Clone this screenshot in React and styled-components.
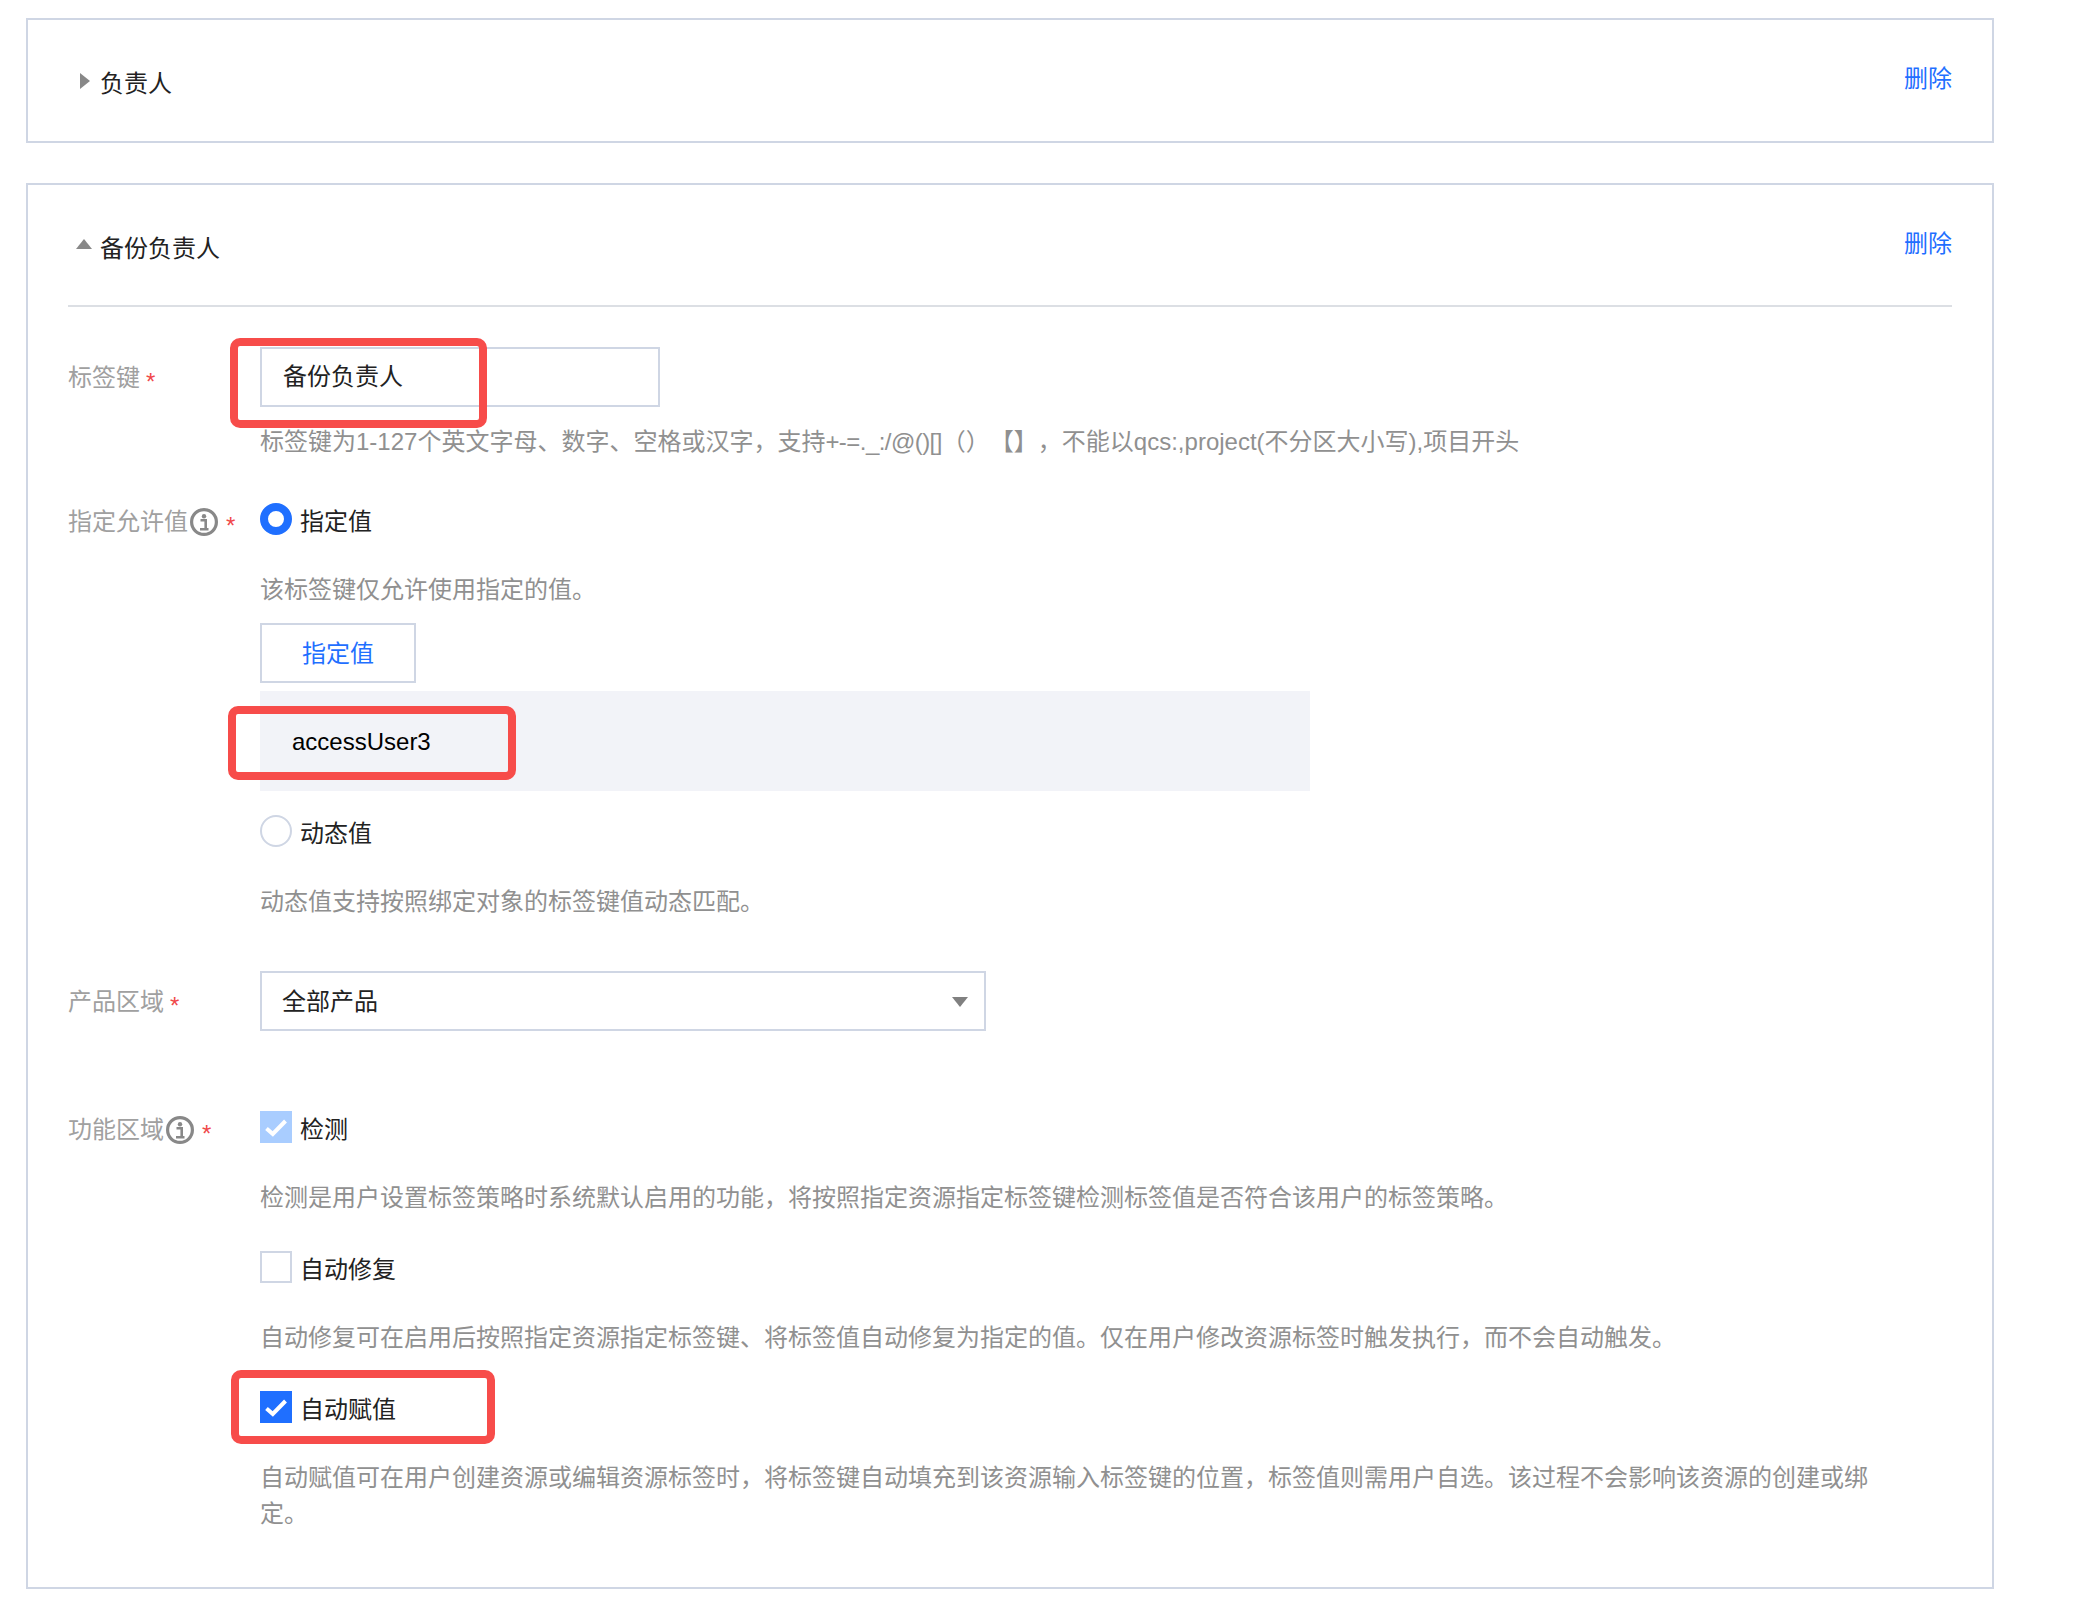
import React from "react";
import styled, { createGlobalStyle } from "styled-components";

const GlobalStyle = createGlobalStyle`
  html, body {
    margin: 0;
    padding: 0;
    background: #fff;
  }
  body {
    font-family: "Liberation Sans", "Noto Sans CJK SC", sans-serif;
    font-size: 24px;
    line-height: 36px;
    color: #222;
    text-spacing-trim: space-all;
  }
`;

function InfoIcon() {
  return (
    <InfoSvg viewBox="0 0 28 28" aria-hidden="true">
      <circle cx="14" cy="14" r="12.4" fill="none" stroke="#888" strokeWidth="3.2" />
      <circle cx="14" cy="8.2" r="2.2" fill="#888" />
      <path d="M10.5 12.2h5.2v9M10 21.2h8.5" fill="none" stroke="#888" strokeWidth="2.6" />
    </InfoSvg>
  );
}

function Check({ color }) {
  return (
    <CheckBox $bg={color}>
      <svg width="32" height="32" viewBox="0 0 32 32" aria-hidden="true">
        <path d="M6.5 17.5l6.3 5.5L25.5 10" fill="none" stroke="#fff" strokeWidth="4" />
      </svg>
    </CheckBox>
  );
}

function App() {
  return (
    <Page>
      <GlobalStyle />
      <Card $collapsed>
        <Header>
          <Title>
            <ArrowRight />
            负责人
          </Title>
          <Remove>删除</Remove>
        </Header>
      </Card>

      <Card $second>
        <Header $divided>
          <Title>
            <ArrowUp />
            备份负责人
          </Title>
          <Remove>删除</Remove>
        </Header>

        <Row $top={40}>
          <Label $center>
            标签键<Star />
          </Label>
          <Field>
            <Marked $box="-9px auto -21px -30px" $width={257}>
              <Input>备份负责人</Input>
            </Marked>
            <Hint $top={16}>
              标签键为1-127个英文字母、数字、空格或汉字，支持<Tight>+-=._:/@()[]</Tight>（）【】，不能以qcs:,project(不分区大小写),项目开头
            </Hint>
          </Field>
        </Row>

        <Row $top={44}>
          <Label>
            指定允许值
            <InfoIcon />
            <Star />
          </Label>
          <Field>
            <Choice>
              <Radio $on />
              指定值
            </Choice>
            <Hint $top={32}>该标签键仅允许使用指定的值。</Hint>
            <ValueButton>指定值</ValueButton>
            <Marked $box="15px auto 11px -32px" $width={288}>
              <ValueStrip>accessUser3</ValueStrip>
            </Marked>
            <Choice $top={24}>
              <Radio />
              动态值
            </Choice>
            <Hint $top={32}>动态值支持按照绑定对象的标签键值动态匹配。</Hint>
          </Field>
        </Row>

        <Row $top={52}>
          <Label $center>
            产品区域<Star />
          </Label>
          <Field>
            <Select>
              全部产品
              <SelectArrow />
            </Select>
          </Field>
        </Row>

        <Row $top={80}>
          <Label>
            功能区域
            <InfoIcon />
            <Star />
          </Label>
          <Field>
            <Choice>
              <Check color="#a9cdff" />
              检测
            </Choice>
            <Hint $top={32}>
              检测是用户设置标签策略时系统默认启用的功能，将按照指定资源指定标签键检测标签值是否符合该用户的标签策略。
            </Hint>
            <Choice $top={36}>
              <CheckBox $empty />
              自动修复
            </Choice>
            <Hint $top={32}>
              自动修复可在启用后按照指定资源指定标签键、将标签值自动修复为指定的值。仅在用户修改资源标签时触发执行，而不会自动触发。
            </Hint>
            <Marked $box="-21px auto -17px -29px" $width={264} $top={36}>
              <Choice>
                <Check color="#1f6fff" />
                自动赋值
              </Choice>
            </Marked>
            <Hint $top={32} $wrap>
              自动赋值可在用户创建资源或编辑资源标签时，将标签键自动填充到该资源输入标签键的位置，标签值则需用户自选。该过程不会影响该资源的创建或绑定。
            </Hint>
          </Field>
        </Row>
      </Card>
    </Page>
  );
}

const Page = styled.div`
  width: 1968px;
  padding: 18px 104px 22px 26px;
`;

const Card = styled.section`
  box-sizing: border-box;
  border: 2px solid #cfd6e4;
  padding: 0 40px ${(p) => (p.$collapsed ? 0 : 56)}px;
  min-height: ${(p) => (p.$collapsed ? 125 : 0)}px;
  margin-top: ${(p) => (p.$second ? 40 : 0)}px;
`;

const Header = styled.div`
  display: flex;
  justify-content: space-between;
  align-items: flex-start;
  padding: 40px 0;
  border-bottom: ${(p) => (p.$divided ? "2px solid #dcdfe4" : "none")};
`;

const Title = styled.div`
  position: relative;
  margin: 4px 0 -2px;
  padding: 2px 0 0 32px;
  color: #222;
`;

const ArrowRight = styled.i`
  position: absolute;
  left: 12px;
  top: 9px;
  border-style: solid;
  border-width: 8px 0 8px 10px;
  border-color: transparent transparent transparent #888;
`;

const ArrowUp = styled.i`
  position: absolute;
  left: 8px;
  top: 10px;
  border-style: solid;
  border-width: 0 8px 10px;
  border-color: transparent transparent #888;
`;

const Remove = styled.a`
  padding-top: 1px;
  color: #1f6fff;
  cursor: pointer;
`;

const Row = styled.div`
  display: flex;
  align-items: flex-start;
  margin-top: ${(p) => p.$top}px;
`;

const Label = styled.div`
  box-sizing: border-box;
  width: 192px;
  flex: none;
  display: flex;
  align-items: center;
  height: ${(p) => (p.$center ? "60px" : "36px")};
  padding-top: 2px;
  color: #a0a0a0;
`;

const InfoSvg = styled.svg`
  width: 28px;
  height: 28px;
  margin-left: 2px;
  flex: none;
`;

const Star = styled.span`
  margin-left: 6px;
  padding-top: 8px;
  color: #f0484a;
  font-size: 24px;
  line-height: 24px;
  &::before {
    content: "*";
  }
  ${InfoSvg} + & {
    margin-left: 8px;
  }
`;

const Field = styled.div`
  flex: 1;
  min-width: 0;
`;

const Marked = styled.div`
  position: relative;
  margin-top: ${(p) => p.$top || 0}px;
  &::after {
    content: "";
    position: absolute;
    inset: ${(p) => p.$box};
    width: ${(p) => p.$width}px;
    box-sizing: border-box;
    border: 8px solid #f74c4a;
    border-radius: 10px;
    pointer-events: none;
  }
`;

const Input = styled.div`
  box-sizing: border-box;
  width: 400px;
  height: 60px;
  border: 2px solid #cfd6e4;
  padding: 10px 21px;
  color: #222;
`;

const Hint = styled.p`
  margin: ${(p) => p.$top}px 0 -1px;
  padding-top: 1px;
  max-width: ${(p) => (p.$wrap ? "1620px" : "none")};
  color: #909090;
`;

const Tight = styled.span`
  letter-spacing: -0.55px;
`;

const Choice = styled.div`
  display: flex;
  align-items: flex-start;
  gap: 8px;
  height: 36px;
  margin-top: ${(p) => p.$top || 0}px;
  line-height: 38px;
  color: #222;
`;

const Radio = styled.span`
  box-sizing: border-box;
  width: 32px;
  height: 32px;
  flex: none;
  border-radius: 50%;
  background: #fff;
  border: ${(p) => (p.$on ? "8px solid #1f6fff" : "2px solid #cfd6e4")};
`;

const CheckBox = styled.span`
  box-sizing: border-box;
  display: block;
  width: 32px;
  height: 32px;
  flex: none;
  background: ${(p) => p.$bg || "#fff"};
  border: ${(p) => (p.$empty ? "2px solid #cfd6e4" : "none")};
`;

const ValueButton = styled.div`
  box-sizing: border-box;
  width: 156px;
  height: 60px;
  margin-top: 16px;
  border: 2px solid #cfd6e4;
  color: #1f6fff;
  line-height: 58px;
  text-align: center;
`;

const ValueStrip = styled.div`
  box-sizing: border-box;
  width: 1050px;
  height: 100px;
  margin-top: 8px;
  padding-left: 32px;
  background: #f2f3f8;
  color: #000;
  line-height: 102px;
`;

const Select = styled.div`
  position: relative;
  box-sizing: border-box;
  width: 726px;
  height: 60px;
  border: 2px solid #cfd6e4;
  padding: 11px 20px;
  color: #222;
`;

const SelectArrow = styled.i`
  position: absolute;
  right: 16px;
  top: 24px;
  border-style: solid;
  border-width: 10px 8px 0;
  border-color: #808080 transparent transparent;
`;

export default App;
